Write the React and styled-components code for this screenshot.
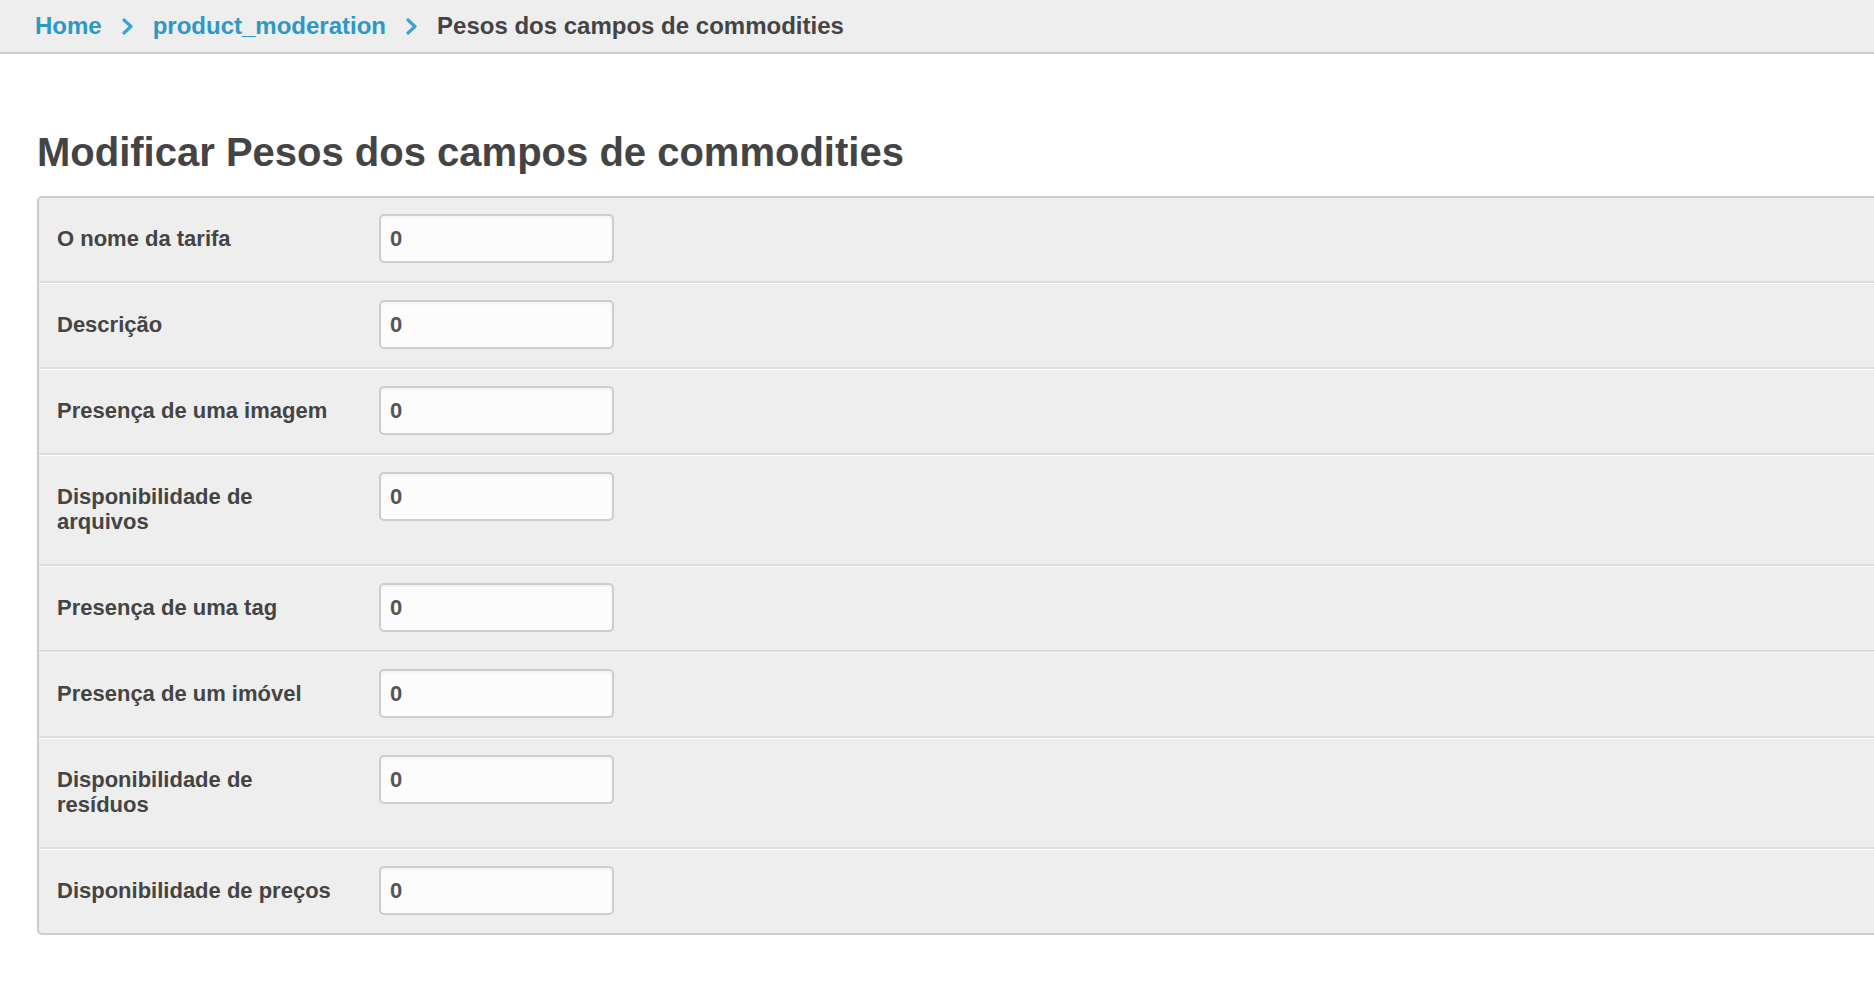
import React from 'react';
import styled, { createGlobalStyle } from 'styled-components';

const Colors = {
    Text: '#444444',
    Link: '#2c98c5',
    Chevron: '#3fa3cf',
    Panel: '#eeeeee',
    PanelBorder: '#cccccc',
    RowBorder: '#dddddd',
    InputBorder: '#cdcdcd',
};

const GlobalStyle = createGlobalStyle`
    html, body {
        margin: 0;
        padding: 0;
        background: #ffffff;
        overflow: hidden;
    }
    body {
        font-family: 'Liberation Sans', Arial, Helvetica, sans-serif;
        color: ${ Colors.Text };
    }
`;

const Page = styled.div`
    min-height: 100vh;
    background: #ffffff;
`;

const Breadcrumbs = styled.nav`
    display: flex;
    align-items: center;
    height: 52px;
    padding-left: 35px;
    background-color: ${ Colors.Panel };
    border-bottom: 2px solid ${ Colors.PanelBorder };
    font-size: 24px;
    font-weight: bold;
    line-height: 52px;
`;

const Crumb = styled.a`
    color: ${ props => props.current ? Colors.Text : Colors.Link };
    text-decoration: none;
    white-space: nowrap;
`;

const Separator = styled.span`
    display: flex;
    align-items: center;
    margin: 0 19px 0 20px;
`;

const Title = styled.h1`
    margin: 74px 0 20px 0;
    padding-left: 37px;
    font-size: 40px;
    line-height: 48px;
    font-weight: bold;
    color: ${ Colors.Text };
`;

const Fieldset = styled.div`
    margin: 0 -40px 0 37px;
    background-color: ${ Colors.Panel };
    border: 2px solid ${ Colors.PanelBorder };
    border-radius: 5px;
`;

const Row = styled.div`
    display: flex;
    align-items: flex-start;
    padding: 16px 18px 17px 18px;
    border-top: ${ props => props.first ? 'none' : '1px solid #ffffff' };
    border-bottom: ${ props => props.last ? 'none' : `2px solid ${ Colors.RowBorder }` };
`;

const Label = styled.label`
    width: 285px;
    margin-right: 37px;
    padding: 12px 0 13px 0;
    font-size: 22px;
    line-height: 25px;
    font-weight: bold;
    color: ${ Colors.Text };
`;

const Input = styled.input`
    box-sizing: border-box;
    width: 235px;
    height: 49px;
    padding: 0 9px;
    border: 2px solid ${ Colors.InputBorder };
    border-radius: 5px;
    background: #fcfcfc;
    box-shadow: inset 0 2px 3px rgba(0, 0, 0, 0.04);
    font-family: 'Liberation Sans', Arial, Helvetica, sans-serif;
    font-size: 22px;
    font-weight: bold;
    color: #555555;
    outline: none;
`;

const Chevron = () => (
    <svg width="12" height="17" viewBox="0 0 12 17">
        <polyline points="2,2 9,8.5 2,15" fill="none" stroke={ Colors.Chevron } strokeWidth="3.2" strokeLinecap="round" strokeLinejoin="round" />
    </svg>
);

const fields = [
    'O nome da tarifa',
    'Descrição',
    'Presença de uma imagem',
    'Disponibilidade de arquivos',
    'Presença de uma tag',
    'Presença de um imóvel',
    'Disponibilidade de resíduos',
    'Disponibilidade de preços',
];

export default function App() {
    return (
        <Page>
            <GlobalStyle />
            <Breadcrumbs>
                <Crumb href="#">Home</Crumb>
                <Separator><Chevron /></Separator>
                <Crumb href="#">product_moderation</Crumb>
                <Separator><Chevron /></Separator>
                <Crumb current>Pesos dos campos de commodities</Crumb>
            </Breadcrumbs>
            <Title>Modificar Pesos dos campos de commodities</Title>
            <Fieldset>
                { fields.map((name, i) => (
                    <Row key={ name } first={ i === 0 } last={ i === fields.length - 1 }>
                        <Label htmlFor={ 'f' + i }>{ name }</Label>
                        <Input id={ 'f' + i } defaultValue="0" />
                    </Row>
                )) }
            </Fieldset>
        </Page>
    );
}
